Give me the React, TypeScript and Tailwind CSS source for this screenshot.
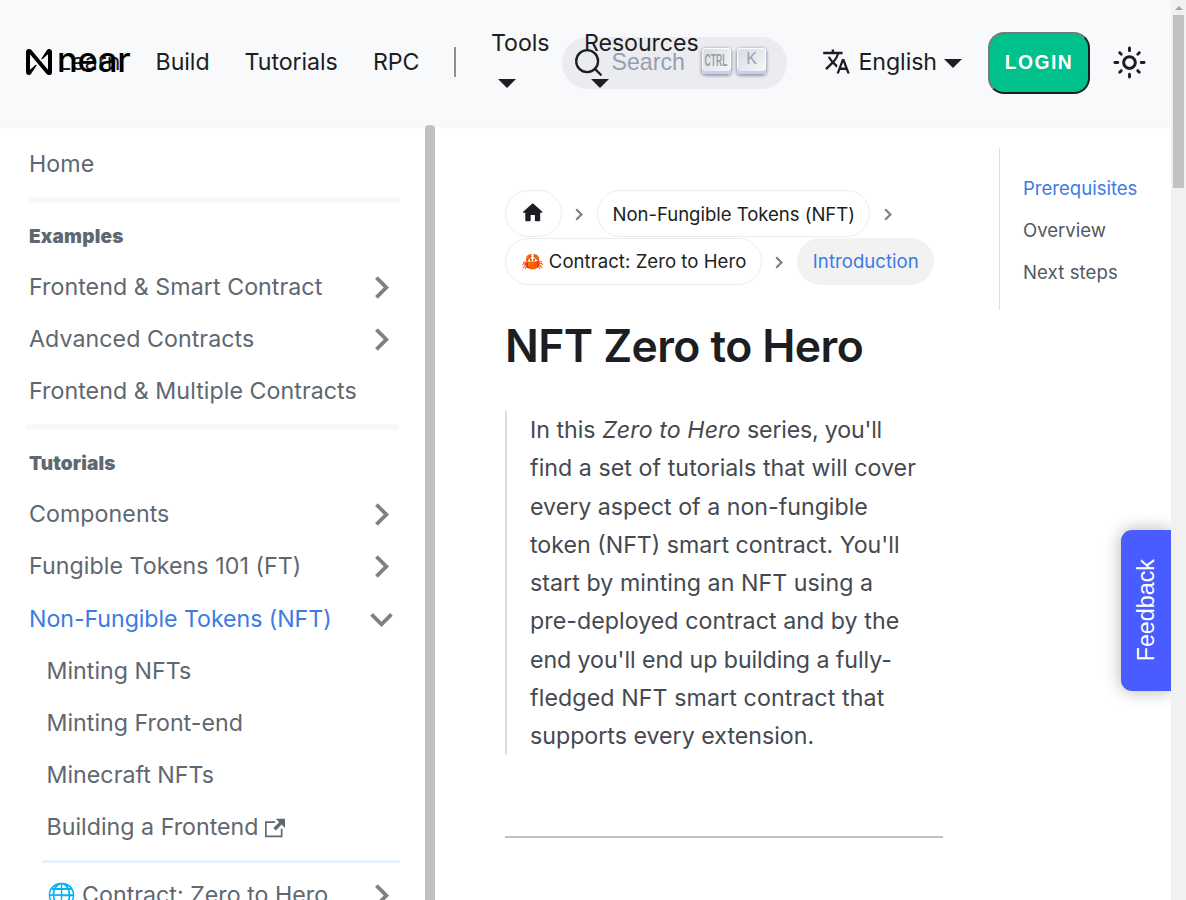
import type { ReactNode } from "react";

const Chevron = ({ down = false }: { down?: boolean }) => (
  <svg width="45" height="45" viewBox="0 0 24 24" className={down ? "-mr-[5px] shrink-0 rotate-90" : "-mr-[5px] shrink-0"} fill="#808080">
    <path d="M8.59 16.59L13.17 12 8.59 7.41 10 6l6 6-6 6z" />
  </svg>
);

const Crumb = ({ children, active = false }: { children: ReactNode; active?: boolean }) => (
  <span
    className={
      active
        ? "flex h-[47px] items-center rounded-full border border-[#f2f2f2] bg-[#f2f2f2] px-[14.5px] text-[#3c7ae4]"
        : "flex h-[47px] items-center rounded-full border border-[#ededed] px-[14.5px]"
    }
  >
    {children}
  </span>
);

const CrumbArrow = () => (
  <svg width="8" height="13" viewBox="0 0 8 13" className="mt-[18px] mr-[14px] ml-[13.5px] shrink-0" fill="none" stroke="#808080" strokeWidth="2.2">
    <path d="M1.2 1.2L6.4 6.5L1.2 11.8" />
  </svg>
);

const Row = ({ label, arrow, active, nested, icon }: { label: string; arrow?: "right" | "down"; active?: boolean; nested?: boolean; icon?: ReactNode }) => (
  <li className={nested ? "flex h-[52.15px] items-center pl-[17.5px]" : "flex h-[52.15px] items-center"}>
    <span className={active ? "flex grow items-center tracking-[-0.06px] text-[#3c7ae4]" : nested ? "flex grow items-center tracking-[0.02px]" : "flex grow items-center tracking-[0.06px]"}>
      {label}
      {icon}
    </span>
    {arrow && <Chevron down={arrow === "down"} />}
  </li>
);

const Caret = () => <span className="h-0 w-0 border-x-[9px] border-t-[9px] border-x-transparent border-t-[#1c1e21]" />;

const Key = ({ children }: { children: ReactNode }) => (
  <span className="flex h-[26px] w-[29px] items-center justify-center rounded-[4px] bg-linear-to-br from-[#d5dbe4] to-[#f8f8f8] shadow-[inset_0_-3px_0_0_#cdcde6,inset_0_0_1px_1px_#fff,0_1px_3px_1px_rgba(30,35,90,0.4)]">
    {children}
  </span>
);

const Header = () => (
  <header className="relative z-10 flex h-[126px] w-full bg-[#f8f9fb] text-[23.2px] leading-[38px] shadow-[0_1px_2px_0_rgba(0,0,0,0.06)]">
    <nav className="relative z-10 flex h-[126px] w-[562px] shrink-0 tracking-[-0.08px]">
      <span className="mt-[43px] ml-[58px] w-[97.6px] shrink-0">Learn</span>
      <span className="mt-[43px] w-[89px] shrink-0">Build</span>
      <span className="mt-[43px] w-[128.4px] shrink-0">Tutorials</span>
      <span className="mt-[43px] w-[81px] shrink-0">RPC</span>
      <span className="mt-[47px] h-[30px] w-[2px] shrink-0 bg-[#8e8f91]" />
      <span className="mt-[24px] ml-[35px] flex w-[93px] shrink-0 flex-col">
        Tools
        <span className="mt-[17px] ml-[7px] flex"><Caret /></span>
      </span>
      <span className="mt-[24px] flex shrink-0 flex-col">
        Resources
        <span className="mt-[17px] ml-[7px] flex"><Caret /></span>
      </span>
      <span className="absolute top-[49px] left-[26px] flex text-black">
        <svg width="26" height="26" viewBox="0 0 90 90">
          <path d="M72.2,4.6L53.4,32.5c-1.3,1.9,1.2,4.2,3,2.6L74.9,19c0.5-0.4,1.2-0.1,1.2,0.6v50.3c0,0.7-0.9,1-1.3,0.5l-56-67C17,1.2,14.4,0,11.5,0h-2C4.3,0,0,4.3,0,9.6v70.8C0,85.7,4.3,90,9.6,90c3.3,0,6.4-1.7,8.2-4.6l18.8-27.9c1.3-1.9-1.2-4.2-3-2.6l-18.5,16c-0.5,0.4-1.2,0.1-1.2-0.6V20.1c0-0.7,0.9-1,1.3-0.5l56,67c1.8,2.2,4.5,3.4,7.3,3.4h2c5.3,0,9.6-4.3,9.6-9.6V9.6c0-5.3-4.3-9.6-9.6-9.6C77.1,0,74,1.7,72.2,4.6z" />
        </svg>
        <span className="-mt-[8px] ml-[5px] origin-left scale-x-[1.03] text-[33.5px] leading-[38px] font-medium tracking-[-0.2px]">near</span>
      </span>
    </nav>
    <div className="mt-[37px] flex h-[52px] w-[225px] shrink-0 items-center rounded-full bg-[#ebecf0] pl-[12px] font-['Liberation_Sans',sans-serif] text-[#969faf]">
      <svg width="29" height="29" viewBox="0 0 20 20" className="-mt-[2px]" fill="none" stroke="#1c1e21" strokeWidth="1.6" strokeLinecap="round" strokeLinejoin="round">
        <path d="M14.386 14.386l4.0877 4.0877-4.0877-4.0877c-2.9418 2.9419-7.7115 2.9419-10.6533 0-2.9419-2.9418-2.9419-7.7115 0-10.6533 2.9418-2.9419 7.7115-2.9419 10.6533 0 2.9419 2.9418 2.9419 7.7115 0 10.6533z" />
      </svg>
      <span className="-mt-[2px] ml-[8.5px] w-[90px] text-[23.2px]">Search</span>
      <span className="-mt-[4px] flex gap-[6.5px]">
        <Key><span className="-mx-2 -mt-[3px] scale-x-[0.52] scale-y-[0.98] text-[16.5px] leading-[20px] font-bold">CTRL</span></Key>
        <Key><span className="-mt-[4px] text-[16px] leading-[20px]">K</span></Key>
      </span>
    </div>
    <div className="mt-[43px] ml-[35px] flex h-[38px] w-[166px] shrink-0 items-center tracking-[-0.08px]">
      <svg width="29" height="29" viewBox="0 0 24 24" fill="#1c1e21" className="-mt-[2px] mr-[7.5px]">
        <path d="M12.87 15.07l-2.54-2.51.03-.03c1.74-1.94 2.98-4.17 3.71-6.53H17V4h-7V2H8v2H1v1.99h11.17C11.5 7.92 10.44 9.75 9 11.35 8.07 10.32 7.3 9.19 6.69 8h-2c.73 1.63 1.73 3.17 2.98 4.56l-5.09 5.02L4 19l5-5 3.11 3.11.76-2.04zM18.5 10h-2L12 22h2l1.12-3h4.75L21 22h2l-4.5-12zm-2.62 7l1.62-4.33L19.12 17h-3.24z" />
      </svg>
      English
      <span className="mt-[3px] ml-[7.5px] flex"><Caret /></span>
    </div>
    <button className="mt-[32px] h-[62px] w-[102px] shrink-0 rounded-[16px] border-2 border-t-[#77797b] border-r-[#1c1e21] border-b-[#1c1e21] border-l-[#77797b] bg-[#00c08b] font-['Liberation_Sans',sans-serif] text-[19.3px] leading-none font-bold tracking-[1.5px] text-white">
      LOGIN
    </button>
    <svg className="mt-[45px] ml-[22px] shrink-0" width="35" height="35" viewBox="0 0 24 24" fill="#1c1e21">
      <path d="M12,9c1.65,0,3,1.35,3,3s-1.35,3-3,3s-3-1.35-3-3S10.35,9,12,9 M12,7c-2.76,0-5,2.24-5,5s2.24,5,5,5s5-2.24,5-5 S14.76,7,12,7L12,7z M2,13l2,0c0.55,0,1-0.45,1-1s-0.45-1-1-1l-2,0c-0.55,0-1,0.45-1,1S1.45,13,2,13z M20,13l2,0c0.55,0,1-0.45,1-1 s-0.45-1-1-1l-2,0c-0.55,0-1,0.45-1,1S19.45,13,20,13z M11,2v2c0,0.55,0.45,1,1,1s1-0.45,1-1V2c0-0.55-0.45-1-1-1S11,1.45,11,2z M11,20v2c0,0.55,0.45,1,1,1s1-0.45,1-1v-2c0-0.55-0.45-1-1-1C11.45,19,11,19.45,11,20z M5.99,4.58c-0.39-0.39-1.03-0.39-1.41,0 c-0.39,0.39-0.39,1.03,0,1.41l1.06,1.06c0.39,0.39,1.03,0.39,1.41,0s0.39-1.03,0-1.41L5.99,4.58z M18.36,16.95 c-0.39-0.39-1.03-0.39-1.41,0c-0.39,0.39-0.39,1.03,0,1.41l1.06,1.06c0.39,0.39,1.03,0.39,1.41,0c0.39-0.39,0.39-1.03,0-1.41 L18.36,16.95z M19.42,5.99c0.39-0.39,0.39-1.03,0-1.41c-0.39-0.39-1.03-0.39-1.41,0l-1.06,1.06c-0.39,0.39-0.39,1.03,0,1.41 s1.03,0.39,1.41,0L19.42,5.99z M7.05,18.36c0.39-0.39,0.39-1.03,0-1.41c-0.39-0.39-1.03-0.39-1.41,0l-1.06,1.06 c-0.39,0.39-0.39,1.03,0,1.41s1.03,0.39,1.41,0L7.05,18.36z" />
    </svg>
  </header>
);

const Sidebar = () => (
  <aside className="w-[425px] shrink-0 overflow-hidden pt-[12px] pr-[26px] pl-[26px] text-[23.2px] leading-[29px] text-[#606770]">
    <ul className="pl-[3px]"><Row label="Home" /></ul>
    <div className="mt-[7px] h-[6px] bg-[#f8f8f8]" />
    <p className="mt-[19px] pl-[3px] text-[19px] leading-[29px] font-black tracking-[0.2px]">Examples</p>
    <ul className="mt-[10px] pl-[3px]">
      <Row label="Frontend & Smart Contract" arrow="right" />
      <Row label="Advanced Contracts" arrow="right" />
      <Row label="Frontend & Multiple Contracts" />
    </ul>
    <div className="mt-[6.3px] h-[6px] bg-[#f8f8f8]" />
    <p className="mt-[19px] pl-[3px] text-[19px] leading-[29px] font-black tracking-[0.15px]">Tutorials</p>
    <ul className="mt-[10.9px] pl-[3px]">
      <Row label="Components" arrow="right" />
      <Row label="Fungible Tokens 101 (FT)" arrow="right" />
      <Row label="Non-Fungible Tokens (NFT)" arrow="down" active />
      <Row nested label="Minting NFTs" />
      <Row nested label="Minting Front-end" />
      <Row nested label="Minecraft NFTs" />
      <Row
        nested
        label="Building a Frontend"
        icon={
          <svg width="20" height="20" viewBox="0 0 24 24" className="ml-[6px]" fill="currentColor">
            <path d="M21 13v10h-21v-19h12v2h-10v15h17v-8h2zm3-12h-10.988l4.035 4-6.977 7.07 2.828 2.828 6.977-7.07 4.125 4.172v-11z" />
          </svg>
        }
      />
    </ul>
    <div className="mt-[6px] ml-[16px] h-[3px] -mr-px bg-[#e7f0fb]" />
    <ul className="mt-[7px] pl-[3px]"><Row nested label="🌐 Contract: Zero to Hero" arrow="right" /></ul>
  </aside>
);

const Article = () => (
  <article className="ml-[70px] w-[438px] shrink-0 pt-[64px]">
    <div className="text-[18.56px] leading-[30px]">
      <div className="flex h-[48px] items-start tracking-[-0.03px]">
        <Crumb>
          <svg width="25.5" height="25.5" viewBox="0 0 24 24" className="-mt-[2px] -ml-[0.5px] mr-[0.5px]" fill="#1c1e21">
            <path d="M10 19v-5h4v5c0 .55.45 1 1 1h3c.55 0 1-.45 1-1v-7h1.7c.46 0 .68-.57.33-.87L12.67 3.6c-.38-.34-.96-.34-1.34 0l-8.36 7.53c-.34.3-.13.87.33.87H5v7c0 .55.45 1 1 1h3c.55 0 1-.45 1-1z" />
          </svg>
        </Crumb>
        <CrumbArrow />
        <Crumb><span className="mt-[1px]">Non-Fungible Tokens (NFT)</span></Crumb>
        <CrumbArrow />
      </div>
      <div className="flex h-[47px] items-start tracking-[0.05px]">
        <Crumb><span className="-mt-[1px]">🦀 Contract: Zero to Hero</span></Crumb>
        <CrumbArrow />
        <Crumb active><span className="-mt-[1px]">Introduction</span></Crumb>
      </div>
    </div>
    <h1 className="mt-[33px] text-[44.5px] leading-[57px] font-semibold tracking-[-0.6px] whitespace-nowrap">NFT Zero to Hero</h1>
    <blockquote className="mt-[36px] border-l-2 border-[#dadde1] pl-[23px] text-[23.2px] leading-[38.25px] text-[#444950]">
      In this <em className="tracking-[0.08px]">Zero to Hero</em> <span className="tracking-[-0.2px]">series, you'll</span>
      <br /><span className="tracking-[0.05px]">find a set of tutorials that will cover</span>
      <br />every aspect of a non-fungible
      <br />token (NFT) smart contract. You'll
      <br /><span className="tracking-[0.05px]">start by minting an NFT using a</span>
      <br /><span className="tracking-[0.05px]">pre-deployed contract and by the</span>
      <br /><span className="tracking-[-0.08px]">end you'll end up building a fully-</span>
      <br /><span className="tracking-[0.1px]">fledged NFT smart contract that</span>
      <br />supports every extension.
    </blockquote>
    <hr className="mt-[81px] border-t-2 border-[#c0c0c0]" />
  </article>
);

export default function App() {
  return (
    <div className="relative flex h-[900px] w-[1186px] overflow-hidden bg-white font-['Inter',sans-serif] text-[#1c1e21]">
      <div className="flex w-[1171px] shrink-0 flex-col">
        <Header />
        <div className="flex h-[774px]">
          <Sidebar />
          <div className="z-20 -mt-px h-[780px] w-[10px] shrink-0 rounded-t-[4px] bg-[#c1c1c1]" />
          <Article />
          <ul className="mt-[22px] ml-[56px] h-[162px] w-[170px] shrink-0 border-l border-[#dadde1] pt-[18.5px] pl-[23px] text-[18.56px] leading-[42px] text-[#525860]">
            <li className="text-[#3c7ae4]">Prerequisites</li>
            <li>Overview</li>
            <li className="tracking-[0.1px]">Next steps</li>
          </ul>
        </div>
      </div>
      <div className="z-20 flex w-[15px] shrink-0 flex-col items-center bg-[#f1f1f1]">
        <span className="mt-[6px] h-0 w-0 border-x-[4px] border-b-[4px] border-x-transparent border-b-[#a3a3a3]" />
        <span className="mt-[5px] h-[173px] w-[11px] bg-[#c1c1c1]" />
      </div>
      <button className="absolute top-[530px] left-[1121px] z-10 flex h-[160.5px] w-[50px] items-center justify-center rounded-l-[11px] bg-[#485cff] font-['Liberation_Sans',sans-serif] text-[23.3px] text-white shadow-[0_0_17px_rgba(0,0,0,0.3)]">
        <span className="rotate-180 [writing-mode:vertical-rl]">Feedback</span>
      </button>
    </div>
  );
}
